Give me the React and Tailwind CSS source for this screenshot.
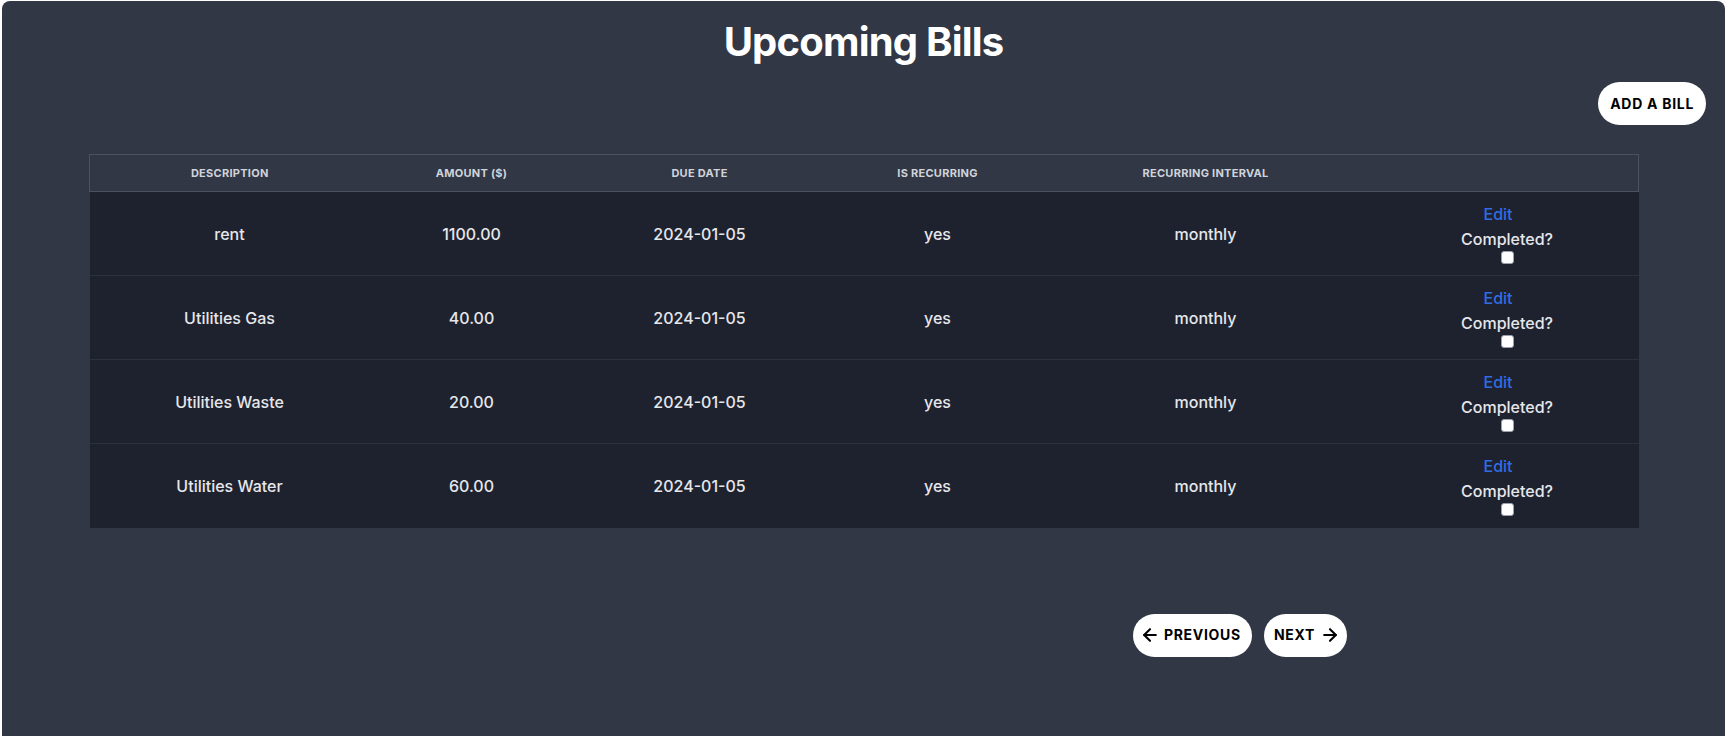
import React from 'react'
import { ArrowLeft, ArrowRight } from 'lucide-react'

const BILLS = [
  { description: 'rent', amount: '1100.00', due: '2024-01-05', recurring: 'yes', interval: 'monthly' },
  { description: 'Utilities Gas', amount: '40.00', due: '2024-01-05', recurring: 'yes', interval: 'monthly' },
  { description: 'Utilities Waste', amount: '20.00', due: '2024-01-05', recurring: 'yes', interval: 'monthly' },
  { description: 'Utilities Water', amount: '60.00', due: '2024-01-05', recurring: 'yes', interval: 'monthly' },
]

const COLUMNS = ['Description', 'Amount ($)', 'Due Date', 'Is Recurring', 'Recurring Interval', '']

export default function App() {
  return (
    <div className="min-h-screen bg-white pl-[2px] pt-[1px] font-[Inter,'Liberation_Sans',sans-serif]">
      <div className="w-[1723px] min-h-[735px] rounded-tl-lg rounded-tr-lg bg-[#313745] pt-[18px]">
        {/* ── Title ─────────────────────────────── */}
        <h1 className="text-center text-[40px] leading-[46px] font-bold tracking-[-0.02em] text-white">
          Upcoming Bills
        </h1>

        {/* ── Add button ────────────────────────── */}
        <div className="mt-[17px] flex justify-end pr-[19px]">
          <button className="flex h-[43px] items-center rounded-full bg-white px-[12px] text-sm font-bold uppercase tracking-wider text-black">
            Add a Bill
          </button>
        </div>

        {/* ── Bills table ───────────────────────── */}
        <div className="mx-auto mt-[29px] w-[1549px]">
          <table className="w-full table-fixed">
            <colgroup>
              <col className="w-[280px]" />
              <col className="w-[204px]" />
              <col className="w-[252px]" />
              <col className="w-[224px]" />
              <col className="w-[312px]" />
              <col className="w-[277px]" />
            </colgroup>
            <thead>
              <tr className="border border-[#4b5262] bg-[#313745]">
                {COLUMNS.map((col, i) => (
                  <th
                    key={i}
                    className="h-[37px] py-0 text-center text-[11px] leading-4 font-bold uppercase tracking-wide text-[#d0d3da]"
                  >
                    {col}
                  </th>
                ))}
              </tr>
            </thead>
            <tbody className="bg-[#1e222f]">
              {BILLS.map((bill, i) => (
                <tr key={bill.description} className={i > 0 ? 'border-t border-[#2c313e]' : ''}>
                  <td className="h-[84px] text-center text-base font-medium text-[#e6e7ea]">{bill.description}</td>
                  <td className="text-center text-base font-medium text-[#e6e7ea]">{bill.amount}</td>
                  <td className="text-center text-base font-medium text-[#e6e7ea]">{bill.due}</td>
                  <td className="text-center text-base font-medium text-[#e6e7ea]">{bill.recurring}</td>
                  <td className="text-center text-base font-medium text-[#e6e7ea]">{bill.interval}</td>
                  <td className="text-center">
                    <div className="flex flex-col items-center pl-[14px]">
                      <a href="#" className="mr-[18px] text-base leading-[22px] font-medium text-[#2f6de5]">
                        Edit
                      </a>
                      <label className="mt-[3px] text-base leading-[22px] font-medium text-[#e6e7ea]">
                        Completed?
                      </label>
                      <input
                        type="checkbox"
                        className="mt-[1px] h-[13px] w-[13px] appearance-none rounded-[3px] border border-gray-400 bg-white"
                      />
                    </div>
                  </td>
                </tr>
              ))}
            </tbody>
          </table>
        </div>

        {/* ── Pagination ────────────────────────── */}
        <div className="mt-[86px] flex justify-end gap-[12px] pr-[378px]">
          <button className="flex h-[43px] items-center gap-1 rounded-full bg-white pl-[7px] pr-[11px] text-sm font-bold uppercase tracking-wider text-black">
            <ArrowLeft size={20} strokeWidth={2.5} />
            Previous
          </button>
          <button className="flex h-[43px] items-center gap-[5px] rounded-full bg-white pl-[10px] pr-[7px] text-sm font-bold uppercase tracking-wider text-black">
            Next
            <ArrowRight size={20} strokeWidth={2.5} />
          </button>
        </div>
      </div>
    </div>
  )
}
